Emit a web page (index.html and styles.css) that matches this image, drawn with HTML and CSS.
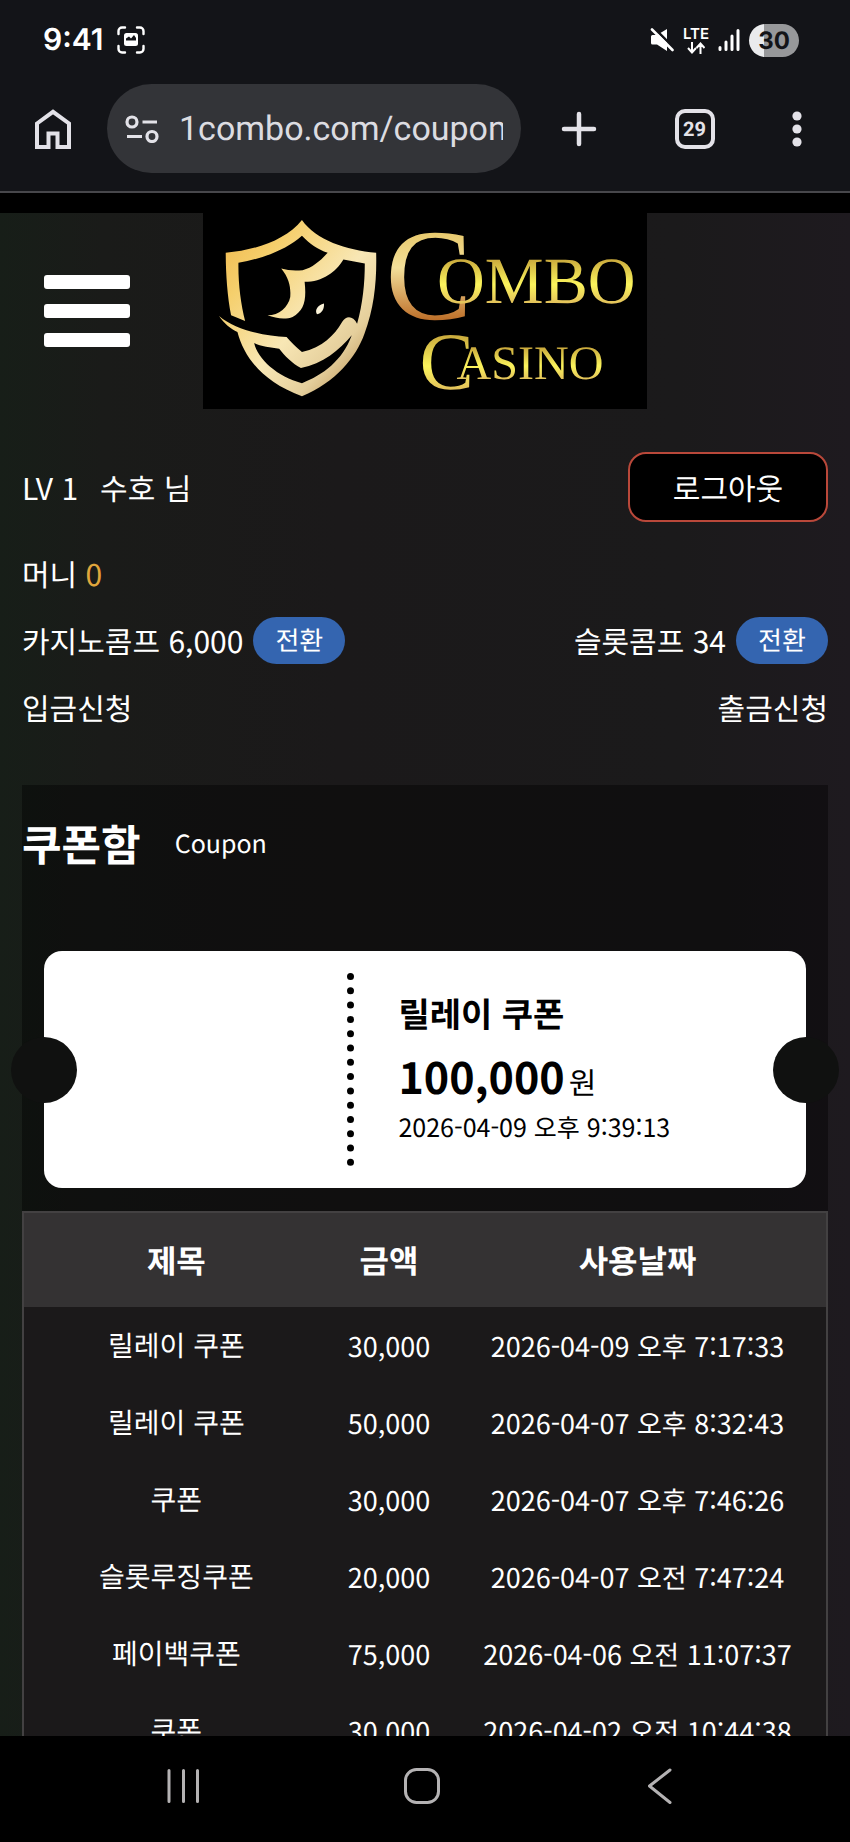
FILE: index.html
```html
<!DOCTYPE html>
<html lang="ko">

<head>
    <meta charset="utf-8">
    <meta name="viewport" content="width=device-width, initial-scale=1">
    <title>쿠폰함</title>

    <link rel="stylesheet" href="styles.css">
</head>

<body>
    <div class="status">
        <span class="status__time">9:41</span>
        <svg class="status__capture" width="28" height="28" viewBox="0 0 28 28" fill="none" stroke="#fff" stroke-width="2.4" stroke-linecap="round">
            <path d="M1.5 8V5a3.5 3.5 0 0 1 3.5-3.5h3M20 1.5h3A3.5 3.5 0 0 1 26.500 5v3M26.500 20v3a3.500 3.500 0 0 1-3.500 3.500h-3M8 26.500H5A3.500 3.500 0 0 1 1.500 23v-3" />
            <rect x="7" y="7" width="14" height="13" rx="2.500" fill="#fff" stroke="none" />
            <path d="M9 14.500v-2l3-2 2 2 3-3.500 2 3v2.500z" fill="#131418" stroke="none" />
        </svg>
        <div class="status__right">
            <svg width="24" height="24" viewBox="0 0 24 24">
                <path d="M1 8.500Q1 7 2.500 7H7l10-6v22l-10-6.500H2.500Q1 16.500 1 15z" fill="#fff" />
                <path d="M4 0l20 20" stroke="#131418" stroke-width="2.600" />
                <path d="M2 1.500l20.500 20.500" stroke="#fff" stroke-width="2.600" stroke-linecap="round" />
            </svg>
            <div class="status__lte">
                <span>LTE</span>
                <svg width="18" height="12" viewBox="0 0 18 12" fill="none" stroke="#fff" stroke-width="2">
                    <path d="M5 0v10M1 6l4 4.500L9 6M13.500 12V2M9.500 6l4-4.500 4 4.500" />
                </svg>
            </div>
            <svg width="22" height="24" viewBox="0 0 22 24" fill="none" stroke="#fff" stroke-width="3" stroke-linecap="round">
                <path d="M2 19.500v2M8 14v7.500M14 8v13.500M20 2.500v19" />
            </svg>
            <span class="status__battery">30</span>
        </div>
    </div>

    <div class="toolbar">
        <button class="toolbar__button" type="button" aria-label="홈">
            <svg width="36" height="40" viewBox="0 0 36 40" fill="none" stroke="#e3e2e8" stroke-width="4">
                <path d="M2 14.500L18 2.800l16 11.700V38H22.500V24.500h-9V38H2z" />
            </svg>
        </button>
        <label class="address">
            <svg width="34" height="28" viewBox="0 0 34 28" fill="none" stroke="#e3e2e8" stroke-width="3.200">
                <circle cx="7" cy="7" r="5" />
                <circle cx="27" cy="21.500" r="5" />
                <path d="M17.500 7H32M2 21.500h15" />
            </svg>
            <input class="address__input" type="text" value="1combo.com/coupon" aria-label="주소">
        </label>
        <div class="toolbar__actions">
            <button class="toolbar__button" type="button" aria-label="새 탭">
                <svg width="36" height="36" viewBox="0 0 36 36" stroke="#e3e2e8" stroke-width="4.500" stroke-linecap="round">
                    <path d="M18 3v30M3 18h30" />
                </svg>
            </button>
            <button class="toolbar__button tabs" type="button">29</button>
            <button class="toolbar__button" type="button" aria-label="메뉴">
                <svg width="10" height="38" viewBox="0 0 10 38" fill="#e3e2e8">
                    <circle cx="5" cy="6" r="4.600" />
                    <circle cx="5" cy="19" r="4.600" />
                    <circle cx="5" cy="32" r="4.600" />
                </svg>
            </button>
        </div>
    </div>

    <div class="page">
        <header class="header">
            <button class="burger" type="button" aria-label="메뉴 열기">
                <span></span>
                <span></span>
                <span></span>
            </button>
            <a class="logo" href="#" aria-label="Combo Casino">
                <svg viewBox="42 39 1326 585">
                    <defs>
                        <linearGradient id="shield" x1="0" y1="0" x2="1" y2="1">
                            <stop offset="0" stop-color="#f0b548" />
                            <stop offset="0.250" stop-color="#f5cf6c" />
                            <stop offset="0.550" stop-color="#f8e7b5" />
                            <stop offset="0.750" stop-color="#e5cf9c" />
                            <stop offset="1" stop-color="#a87b3c" />
                        </linearGradient>
                        <linearGradient id="capital" x1="0" y1="0" x2="0" y2="1">
                            <stop offset="0.100" stop-color="#e3c05a" />
                            <stop offset="0.450" stop-color="#f3df9a" />
                            <stop offset="0.850" stop-color="#b8641e" />
                        </linearGradient>
                        <linearGradient id="letters" x1="0" y1="0" x2="0" y2="1">
                            <stop offset="0.200" stop-color="#c9a83c" />
                            <stop offset="0.550" stop-color="#fbf45c" />
                            <stop offset="0.850" stop-color="#dfb95a" />
                        </linearGradient>
                    </defs>
                    <path fill="url(#shield)" fill-rule="evenodd" d="M338 60C290 120 200 150 110 158C110 220 115 290 126 345L168 362C155 310 147 250 148 188C220 175 290 150 338 107C360 130 385 148 415 158C395 180 370 203 340 210Q305 214 276 205C300 235 305 260 303 290C297 320 270 345 235 345C260 355 290 358 310 350C345 330 352 300 346 245C400 245 440 215 462 178L526 190C526 250 520 310 503 370C490 345 470 345 458 365C435 405 400 440 338 455C320 440 305 425 292 410C230 408 140 390 90 347C105 370 125 385 145 395C165 470 220 545 338 587C440 545 500 470 525 400C555 320 562 240 560 158C470 150 380 120 338 60ZM195 428C205 475 265 530 338 548C400 525 460 480 487 405C450 450 400 490 335 503C310 490 285 465 270 445C245 442 215 438 195 428Z" />
                    <path fill="#fbf3d8" d="M404 310C385 315 375 330 383 342C398 340 405 325 404 310Z" />
                    <g class="logo__text">
                        <text x="588" y="355" font-size="390" fill="url(#capital)">C</text>
                        <text x="742" y="308" font-size="198" fill="url(#letters)">OMBO</text>
                        <text x="690" y="566" font-size="244" fill="url(#letters)">C</text>
                        <text x="800" y="536" font-size="144" fill="url(#letters)">ASINO</text>
                    </g>
                </svg>
            </a>
        </header>

        <section class="user">
            <div class="user__row user__row--top">
                <div class="user__name"><span>LV 1</span><span>수호 님</span></div>
                <button class="logout" type="button">로그아웃</button>
            </div>
            <div class="user__row">
                <span>머니 <span class="money">0</span></span>
            </div>
            <div class="user__row">
                <div class="comp">카지노콤프 6,000 <button class="convert" type="button">전환</button></div>
                <div class="comp">슬롯콤프 34 <button class="convert" type="button">전환</button></div>
            </div>
            <div class="user__row">
                <a href="#">입금신청</a>
                <a href="#">출금신청</a>
            </div>
        </section>

        <main class="panel">
            <div class="panel__title">
                <h1>쿠폰함</h1>
                <span>Coupon</span>
            </div>

            <article class="coupon">
                <div class="coupon__stub"></div>
                <div class="coupon__info">
                    <h2 class="coupon__name">릴레이 쿠폰</h2>
                    <p class="coupon__amount"><strong>100,000</strong>원</p>
                    <p class="coupon__date">2026-04-09 오후 9:39:13</p>
                </div>
            </article>

            <table class="history">
                <thead>
                    <tr>
                        <th class="history__title">제목</th>
                        <th class="history__amount">금액</th>
                        <th>사용날짜</th>
                    </tr>
                </thead>
                <tbody>
                    <tr>
                        <td>릴레이 쿠폰</td>
                        <td>30,000</td>
                        <td>2026-04-09 오후 7:17:33</td>
                    </tr>
                    <tr>
                        <td>릴레이 쿠폰</td>
                        <td>50,000</td>
                        <td>2026-04-07 오후 8:32:43</td>
                    </tr>
                    <tr>
                        <td>쿠폰</td>
                        <td>30,000</td>
                        <td>2026-04-07 오후 7:46:26</td>
                    </tr>
                    <tr>
                        <td>슬롯루징쿠폰</td>
                        <td>20,000</td>
                        <td>2026-04-07 오전 7:47:24</td>
                    </tr>
                    <tr>
                        <td>페이백쿠폰</td>
                        <td>75,000</td>
                        <td>2026-04-06 오전 11:07:37</td>
                    </tr>
                    <tr>
                        <td>쿠폰</td>
                        <td>30,000</td>
                        <td>2026-04-02 오전 10:44:38</td>
                    </tr>
                </tbody>
            </table>
        </main>
    </div>

    <nav class="navbar">
        <button type="button" aria-label="최근 앱">
            <svg width="36" height="36" viewBox="0 0 36 36" stroke="#b4b2b3" stroke-width="3" stroke-linecap="round">
                <path d="M3 2.500v31M17.500 2.500v31M31.500 2.500v31" />
            </svg>
        </button>
        <button type="button" aria-label="홈 화면">
            <svg width="36" height="36" viewBox="0 0 36 36" fill="none" stroke="#b4b2b3" stroke-width="3">
                <rect x="1.500" y="1.500" width="33" height="33" rx="11" />
            </svg>
        </button>
        <button type="button" aria-label="뒤로">
            <svg width="36" height="36" viewBox="0 0 36 36" fill="none" stroke="#b4b2b3" stroke-width="3" stroke-linecap="round" stroke-linejoin="round">
                <path d="M28 2L7.500 18 28 34.500" />
            </svg>
        </button>
    </nav>
</body>

</html>
```
FILE: styles.css
```css
* {
    padding: 0;
    margin: 0;
    box-sizing: border-box;
}

body {
    display: flex;
    flex-direction: column;
    height: 100vh;
    overflow: hidden;
    background: #000;
    color: #fff;
    font-family: "Noto Sans CJK KR", sans-serif;
    font-size: 30px;
    line-height: 44px;
    text-rendering: geometricPrecision;
}

button,
input {
    border: none;
    background: none;
    color: inherit;
    font: inherit;
    text-rendering: inherit;
}

a {
    color: inherit;
    text-decoration: none;
}

svg {
    display: block;
}

/* Status bar */
.status {
    display: flex;
    flex-shrink: 0;
    align-items: center;
    gap: 14px;
    height: 80px;
    padding: 0 51px 0 43px;
    background: #131418;
    font-family: Inter, sans-serif;
}

.status__time {
    font-weight: 600;
}

.status__right {
    display: flex;
    align-items: center;
    gap: 9px;
    margin-left: auto;
}

.status__lte {
    display: flex;
    flex-direction: column;
    align-items: center;
    gap: 2px;
    font-size: 15px;
    font-weight: 600;
    line-height: 13px;
}

.status__battery {
    width: 50px;
    border-radius: 17px;
    background: linear-gradient(to right, #eaebed 30%, #97989a 30%);
    color: #131418;
    font-size: 24px;
    font-weight: 700;
    line-height: 33px;
    text-align: center;
}

/* Browser toolbar */
.toolbar {
    display: flex;
    flex-shrink: 0;
    align-items: center;
    gap: 36px;
    height: 113px;
    padding: 5px 48px 19px 35px;
    border-bottom: 2px solid #47474b;
    background: #131418;
}

.toolbar__actions {
    display: flex;
    flex: 1;
    align-items: center;
    justify-content: space-between;
    padding-left: 4px;
}

.address {
    display: flex;
    align-items: center;
    gap: 20px;
    width: 54%;
    height: 89px;
    padding: 0 18px;
    border-radius: 45px;
    background: #333438;
}

.address svg {
    flex-shrink: 0;
}

.address__input {
    flex: 1;
    min-width: 0;
    color: #dcdce1;
    font-family: Roboto, sans-serif;
    font-size: 34px;
    outline: none;
}

.tabs {
    width: 40px;
    height: 40px;
    border: 4px solid #e3e2e8;
    border-radius: 10px;
    color: #e3e2e8;
    font-family: Roboto, sans-serif;
    font-size: 20px;
    font-weight: 700;
    line-height: 32px;
}

/* Page */
.page {
    flex: 1;
    min-height: 0;
    overflow: hidden;
    margin-top: 20px;
    padding: 0 22px;
    background: linear-gradient(to right, #171e18, #1a1b19 12%, #1b191a 40%, #1b1a1b 80%, #1e1a1f);
}

.header {
    display: grid;
    grid-template-columns: 1fr 55% 1fr;
    align-items: center;
}

.burger {
    display: flex;
    flex-direction: column;
    gap: 15px;
    width: 86px;
    margin-left: 22px;
}

.burger span {
    height: 14px;
    border-radius: 3px;
    background: #fff;
}

.logo {
    background: #000;
}

.logo__text {
    font-family: "Liberation Serif", serif;
}

/* User info */
.user {
    display: flex;
    flex-direction: column;
    gap: 20px;
    padding: 43px 0 54px;
}

.user__row {
    display: flex;
    align-items: center;
    justify-content: space-between;
    height: 47px;
}

.user__row--top {
    height: 70px;
    margin-bottom: 8px;
}

.user__name {
    display: flex;
    gap: 22px;
}

.logout {
    width: 200px;
    height: 70px;
    border: 2px solid #b9483a;
    border-radius: 18px;
    background: #000;
}

.money {
    color: #e0a63c;
}

.comp {
    display: flex;
    align-items: center;
    gap: 10px;
}

.convert {
    width: 92px;
    height: 47px;
    border-radius: 24px;
    background: #3465b0;
    font-size: 26px;
}

/* Coupons */
.panel {
    background: rgba(0, 0, 0, 0.4);
}

.panel__title {
    display: flex;
    align-items: center;
    gap: 34px;
    padding: 26px 0 76px;
}

.panel__title h1 {
    font-size: 43px;
    line-height: 64px;
}

.panel__title span {
    font-size: 25px;
}

.coupon {
    position: relative;
    display: grid;
    grid-template-columns: 11fr 16fr;
    height: 237px;
    margin: 0 22px 23px;
    padding: 22px 0;
    border-radius: 18px;
    background: #fff;
    color: #000;
}

/* Side notches */
.coupon::before,
.coupon::after {
    content: "";
    position: absolute;
    top: 86px;
    width: 66px;
    height: 66px;
    border-radius: 50%;
    background: #101110;
}

.coupon::before {
    left: -33px;
}

.coupon::after {
    right: -33px;
}

.coupon__stub {
    border-right: 7px dotted #000;
}

.coupon__info {
    display: flex;
    flex-direction: column;
    justify-content: center;
    padding: 0 0 4px 44px;
}

.coupon__name {
    margin-bottom: 7px;
    font-size: 34px;
    line-height: 50px;
}

.coupon__amount {
    font-size: 30px;
    line-height: 44px;
}

.coupon__amount strong {
    margin-right: 4px;
    font-size: 43px;
    line-height: 63px;
}

.coupon__date {
    font-size: 25px;
    line-height: 38px;
}

.history {
    width: 100%;
    table-layout: fixed;
    border: 2px solid #434142;
    border-spacing: 0;
    background: #1b191a;
    font-size: 28px;
    line-height: 41px;
    text-align: center;
}

.history__title {
    width: 38%;
}

.history__amount {
    width: 15%;
}

.history th {
    padding: 23px 0;
    background: #343233;
    font-size: 32px;
    line-height: 48px;
}

.history td {
    padding: 18px 0;
}

/* Amount and date */
.history td + td {
    font-size: 27px;
}

/* Android navigation */
.navbar {
    display: flex;
    flex-shrink: 0;
    align-items: center;
    justify-content: space-around;
    height: 106px;
    padding: 0 71px 6px 65px;
    background: #000;
}
```
